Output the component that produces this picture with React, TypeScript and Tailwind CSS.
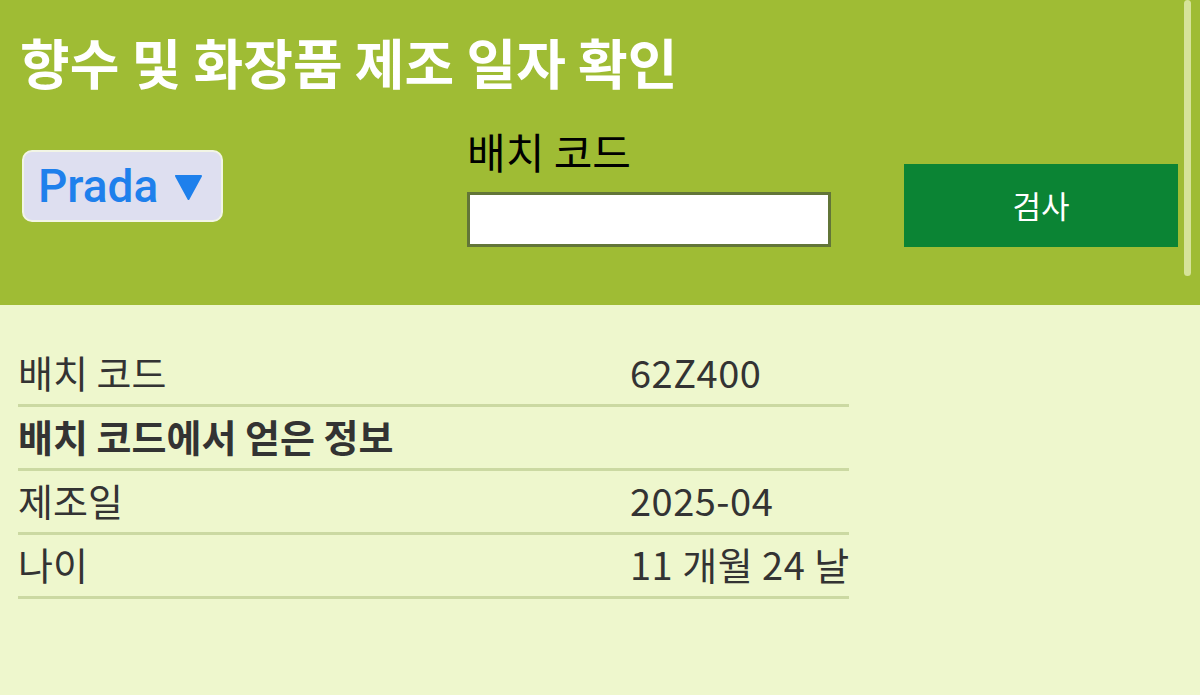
import { useState } from "react";

const rows = [
  { label: "배치 코드", value: "62Z400" },
  { label: "배치 코드에서 얻은 정보", value: "", bold: true },
  { label: "제조일", value: "2025-04" },
  { label: "나이", value: "11 개월 24 날" },
];

export default function App() {
  const [code, setCode] = useState("");

  return (
    <div className="min-h-[695px] bg-[#eef7cd] font-['Noto_Sans_CJK_KR',sans-serif]">
      <header className="relative h-[305px] bg-[#9fbc34] pl-5 pt-[30px]">
        <h1 className="h-[64px] text-[54px] font-bold leading-[64px] text-white">
          향수 및 화장품 제조 일자 확인
        </h1>
        <div className="mt-[33px] flex items-start">
          <button className="ml-[2px] mt-[23px] flex h-[72px] w-[201px] items-center gap-[16px] rounded-[10px] border-2 border-[#f2f5e6] bg-[#dedff0] pl-[14px] font-['Roboto',sans-serif] text-[46px] font-medium text-[#1e80ec]">
            Prada
            <svg width="29" height="27" viewBox="0 0 29 27" className="mt-[3px]">
              <path d="M2 2 H27 L14.5 25 Z" fill="#1e80ec" stroke="#1e80ec" strokeWidth="2" strokeLinejoin="round" />
            </svg>
          </button>
          <div className="ml-[244px] flex flex-col">
            <label className="h-[48px] text-[42px] leading-[48px] text-black">배치 코드</label>
            <input
              value={code}
              onChange={(e) => setCode(e.target.value)}
              className="mt-[17px] h-[55px] w-[364px] border-[3px] border-[#627538] bg-white px-2 text-2xl outline-none"
            />
          </div>
          <button className="ml-[73px] mt-[37px] h-[83px] w-[274px] bg-[#0b8434] text-[31px] text-white">
            검사
          </button>
        </div>
        <div className="absolute right-[9px] top-0 h-[276px] w-[7px] rounded-full bg-[#d6e39a]" />
      </header>

      <div className="px-[18px] pt-[38px]">
        <div className="w-[831px]">
          {rows.map((r) => (
            <div
              key={r.label}
              className="grid h-[64px] grid-cols-[612px_1fr] items-center whitespace-nowrap border-b-[3px] border-[#cbd9a2] pb-[6px] text-[38px] text-[#333333]"
            >
              <span className={r.bold ? "font-bold" : ""}>{r.label}</span>
              <span className="tracking-[0.5px]">{r.value}</span>
            </div>
          ))}
        </div>
      </div>
    </div>
  );
}
